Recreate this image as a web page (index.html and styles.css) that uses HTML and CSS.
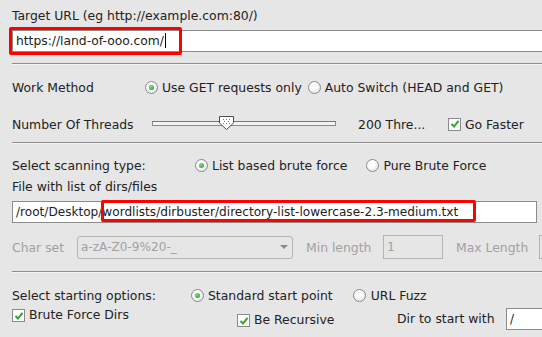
FILE: index.html
```html
<!DOCTYPE html>
<html>
<head>
    <link rel="stylesheet" href="styles.css">
</head>
<body>
    <div class="panel">
        <!-- Target -->
        <div class="row row-title">Target URL (eg http://example.com:80/)</div>
        <div class="field-wrap">
            <div class="field field-url">https://land-of-ooo.com/<span class="caret"></span></div>
            <span class="mark mark-url"></span>
        </div>
        <div class="sep sep-first"></div>

        <!-- Work method -->
        <div class="row row-method">
            <span class="label label-method">Work Method</span>
            <span class="radio checked"></span><span class="opt">Use GET requests only</span>
            <span class="radio"></span><span class="opt">Auto Switch (HEAD and GET)</span>
        </div>
        <div class="row row-threads">
            <span class="label label-threads">Number Of Threads</span>
            <div class="slider">
                <div class="track"></div>
                <svg class="thumb" width="17" height="16" viewBox="0 0 17 16">
                    <path d="M1.5 1.5 H15.5 V8 L8.5 14.5 L1.5 8 Z" fill="#fff" stroke="#4d4d4d"/>
                    <g fill="#777">
                        <rect x="5" y="4" width="1" height="1"/><rect x="8" y="4" width="1" height="1"/><rect x="11" y="4" width="1" height="1"/>
                        <rect x="6" y="6" width="1" height="1"/><rect x="10" y="6" width="1" height="1"/>
                        <rect x="5" y="8" width="1" height="1"/><rect x="8" y="8" width="1" height="1"/><rect x="11" y="8" width="1" height="1"/>
                    </g>
                </svg>
            </div>
            <span class="threads-count">200 Thre...</span>
            <span class="check"><svg width="10" height="10" viewBox="0 0 10 10"><path d="M1.5 5 L4 7.5 L8.5 1.8" fill="none" stroke="#2ea62e" stroke-width="2"/></svg></span>
            <span class="opt">Go Faster</span>
        </div>
        <div class="sep sep-second"></div>

        <!-- Scanning type -->
        <div class="row row-scan">
            <span class="label label-scan">Select scanning type:</span>
            <span class="radio checked"></span><span class="opt">List based brute force</span>
            <span class="radio"></span><span class="opt">Pure Brute Force</span>
        </div>
        <div class="row row-file">File with list of dirs/files</div>
        <div class="field-wrap">
            <div class="field field-file">/root/Desktop/wordlists/dirbuster/directory-list-lowercase-2.3-medium.txt</div>
            <span class="mark mark-file"></span>
        </div>
        <div class="row row-charset">
            <span class="label disabled label-charset">Char set</span>
            <div class="combo">
                <span class="combo-text">a-zA-Z0-9%20-_</span>
                <span class="combo-arrow"></span>
            </div>
            <span class="label disabled label-min">Min length</span>
            <div class="field field-small disabled">1</div>
            <span class="label disabled label-max">Max Length</span>
            <div class="field field-max"></div>
        </div>
        <div class="sep sep-third"></div>

        <!-- Starting options -->
        <div class="row row-start">
            <span class="label label-start">Select starting options:</span>
            <span class="radio checked"></span><span class="opt">Standard start point</span>
            <span class="radio radio-fuzz"></span><span class="opt">URL Fuzz</span>
        </div>
        <div class="row row-brute">
            <span class="check"><svg width="10" height="10" viewBox="0 0 10 10"><path d="M1.5 5 L4 7.5 L8.5 1.8" fill="none" stroke="#2ea62e" stroke-width="2"/></svg></span>
            <span class="opt label-brute">Brute Force Dirs</span>
            <span class="check check-low"><svg width="10" height="10" viewBox="0 0 10 10"><path d="M1.5 5 L4 7.5 L8.5 1.8" fill="none" stroke="#2ea62e" stroke-width="2"/></svg></span>
            <span class="opt label-recursive">Be Recursive</span>
            <span class="label label-dir">Dir to start with</span>
            <div class="field field-dir">/</div>
        </div>
    </div>
</body>
</html>
```

FILE: styles.css
```css
body {
    margin: 0;
    background-color: #e6e6e6;
    font-family: "DejaVu Sans", sans-serif;
    font-size: 12.4px;
    color: #222;
    overflow: hidden;
}

.panel {
    width: 530px;
    height: 337px;
    padding-left: 12px;
    overflow: hidden;
}

.row {
    display: flex;
    align-items: center;
    white-space: nowrap;
}

.row > * {
    flex: none;
}

.disabled {
    color: #a2a2a2;
}

.opt {
    margin-left: 4px;
}

/* rows, top to bottom */
.row-title {
    height: 30px;
}

.field-wrap {
    position: relative;
}

.field {
    box-sizing: border-box;
    height: 22px;
    border: 1px solid #8c8c8c;
    background-color: #ffffff;
    padding-left: 3px;
    line-height: 20px;
    white-space: nowrap;
}

.field-url {
    width: 540px;
    font-size: 12.3px;
}

.caret {
    display: inline-block;
    width: 1px;
    height: 15px;
    margin-left: 1px;
    background-color: #000;
    vertical-align: -3px;
}

.mark {
    position: absolute;
    border: 3px solid #ff0000;
    border-radius: 2px;
}

.mark-url {
    left: -3px;
    top: -3px;
    width: 167px;
    height: 22px;
}

.sep {
    width: 540px;
    height: 1px;
    background-color: #8e8e8e;
    border-bottom: 1px solid #f4f4f4;
}

.sep-first {
    margin-top: 11px;
}

.row-method {
    height: 44px;
}

.label-method {
    width: 133px;
}

.radio {
    position: relative;
    box-sizing: border-box;
    width: 13px;
    height: 13px;
    border: 1px solid #8a8a8a;
    border-radius: 50%;
    background: radial-gradient(circle at 40% 35%, #ffffff 30%, #dcdcdc 100%);
}

.radio.checked::after {
    content: "";
    position: absolute;
    left: 3px;
    top: 3px;
    width: 5px;
    height: 5px;
    border-radius: 50%;
    background: radial-gradient(circle at 40% 35%, #7fd87f, #229922);
}

.row-method .radio + .opt + .radio {
    margin-left: 6px;
}

.row-threads {
    height: 30px;
}

.label-threads {
    width: 140px;
}

.slider {
    position: relative;
    width: 184px;
    height: 16px;
}

.track {
    position: absolute;
    left: 0;
    right: 0;
    top: 5px;
    height: 3px;
    border: 1px solid #8a8a8a;
    border-top-color: #777;
    background-color: #f2f2f2;
}

.thumb {
    position: absolute;
    left: 66px;
    top: -1px;
}

.threads-count {
    margin-left: 22px;
    width: 90px;
}

.check {
    box-sizing: border-box;
    width: 13px;
    height: 13px;
    border: 1px solid #8a8a8a;
    background-color: #ffffff;
    display: flex;
    align-items: center;
    justify-content: center;
}

.sep-second {
    margin-top: 3px;
}

.row-scan {
    height: 22px;
    margin-top: 10px;
}

.label-scan {
    width: 183px;
}

.row-scan .radio + .opt + .radio {
    margin-left: 19px;
}

.row-file {
    height: 20px;
}

.row-file + .field-wrap {
    margin-top: 5px;
}

.field-file {
    width: 525px;
    font-size: 12.1px;
}

.mark-file {
    left: 89px;
    top: -1px;
    width: 369px;
    height: 16px;
}

.row-charset {
    height: 24px;
    margin-top: 12px;
}

.label-charset {
    width: 65px;
}

.combo {
    box-sizing: border-box;
    width: 216px;
    height: 23px;
    border: 1px solid #b4b4b4;
    border-radius: 3px;
    display: flex;
    align-items: center;
    padding-left: 3px;
    color: #a2a2a2;
    font-size: 12.1px;
}

.combo-text {
    flex: 1;
}

.combo-arrow {
    width: 0;
    height: 0;
    margin-right: 4px;
    border-left: 4px solid transparent;
    border-right: 4px solid transparent;
    border-top: 4px solid #8a8a8a;
}

.label-min {
    margin-left: 13px;
    width: 77px;
}

.field-small {
    width: 60px;
    height: 24px;
    border-color: #b4b4b4;
    background-color: #e6e6e6;
    line-height: 22px;
}

.label-max {
    margin-left: 13px;
    width: 83px;
}

.field-max {
    width: 20px;
    height: 24px;
    border-color: #b4b4b4;
    background-color: #e6e6e6;
}

.sep-third {
    margin-top: 12px;
}

.row-start {
    height: 18px;
    margin-top: 13px;
}

.label-start {
    width: 179px;
}

.radio-fuzz {
    margin-left: 20px;
}

.row-start .radio-fuzz + .opt {
    margin-left: 5px;
}

.row-brute {
    height: 24px;
    align-items: flex-start;
}

.row-brute .check {
    margin-top: 5px;
}

.row-brute .opt {
    margin-top: 3px;
}

.label-brute {
    width: 208px;
}

.row-brute .check-low {
    margin-top: 10px;
}

.label-recursive {
    width: 143px;
    margin-top: 8px !important;
}

.label-dir {
    margin-top: 7px;
    width: 109px;
}

.field-dir {
    width: 40px;
    margin-top: 4px;
    font-size: 12.1px;
}
```
